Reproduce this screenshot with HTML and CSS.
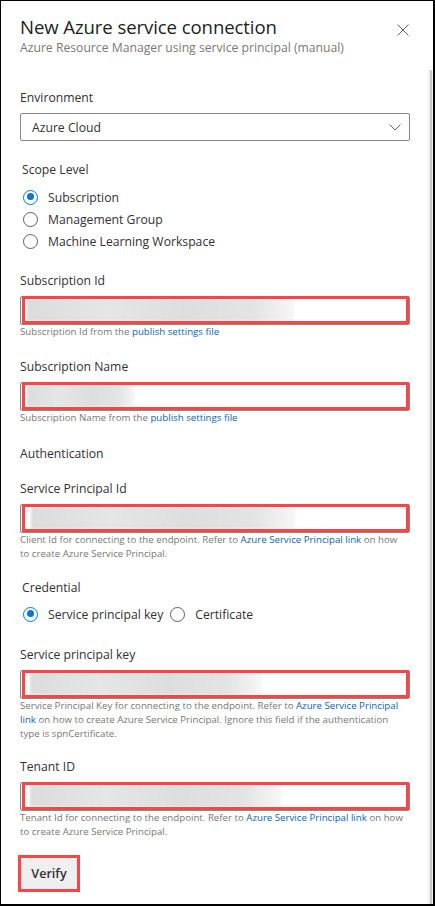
FILE: index.html
```html
<!DOCTYPE html>
<html>
<head>
<meta charset="utf-8">
<link rel="stylesheet" href="styles.css">
</head>
<body>
<div class="frame">
  <div class="scrollbar"><div class="thumb"></div></div>
  <div class="panel">
    <header class="head">
      <div class="titles">
        <h1 class="title">New Azure service connection</h1>
        <div class="subtitle">Azure Resource Manager using service principal (manual)</div>
      </div>
      <svg class="close" width="12" height="12" viewBox="0 0 12 12"><path d="M0.5 0.5 L11.5 11.5 M11.5 0.5 L0.5 11.5" stroke="#605e5c" stroke-width="1" fill="none"/></svg>
    </header>

    <section class="field env">
      <div class="label">Environment</div>
      <div class="select">
        <span>Azure Cloud</span>
        <svg class="chev" width="12" height="7" viewBox="0 0 12 7"><path d="M0.5 0.5 L6 6 L11.5 0.5" stroke="#605e5c" stroke-width="1" fill="none"/></svg>
      </div>
    </section>

    <section class="group scope">
      <div class="label indent">Scope Level</div>
      <div class="radios col">
        <div class="radio checked"><span class="dot"></span><span>Subscription</span></div>
        <div class="radio"><span class="dot"></span><span>Management Group</span></div>
        <div class="radio"><span class="dot"></span><span>Machine Learning Workspace</span></div>
      </div>
    </section>

    <section class="field first">
      <div class="label">Subscription Id</div>
      <div class="input"><div class="blur" style="left:6px;width:267px"></div><div class="mark"></div></div>
      <div class="help">Subscription Id from the <a>publish settings file</a></div>
    </section>

    <section class="field">
      <div class="label">Subscription Name</div>
      <div class="input"><div class="blur" style="left:6px;width:108px"></div><div class="mark"></div></div>
      <div class="help">Subscription Name from the <a>publish settings file</a></div>
    </section>

    <div class="label section">Authentication</div>

    <section class="field">
      <div class="label">Service Principal Id</div>
      <div class="input"><div class="blur" style="left:10px;width:264px"></div><div class="mark"></div></div>
      <div class="help">Client Id for connecting to the endpoint. Refer to <a>Azure Service Principal link</a> on how to create Azure Service Principal.</div>
    </section>

    <section class="group cred">
      <div class="label indent">Credential</div>
      <div class="radios row">
        <div class="radio checked"><span class="dot"></span><span>Service principal key</span></div>
        <div class="radio"><span class="dot"></span><span>Certificate</span></div>
      </div>
    </section>

    <section class="field">
      <div class="label">Service principal key</div>
      <div class="input"><div class="blur" style="left:9px;width:232px"></div><div class="mark"></div></div>
      <div class="help">Service Principal Key for connecting to the endpoint. Refer to <a>Azure Service Principal link</a> on how to create Azure Service Principal. Ignore this field if the authentication type is spnCertificate.</div>
    </section>

    <section class="field tenant">
      <div class="label">Tenant ID</div>
      <div class="input"><div class="blur" style="left:9px;width:252px"></div><div class="mark"></div></div>
      <div class="help">Tenant Id for connecting to the endpoint. Refer to <a>Azure Service Principal link</a> on how to create Azure Service Principal.</div>
    </section>

    <div class="actions">
      <button class="verify">Verify</button>
    </div>
  </div>
</div>
</body>
</html>
```
FILE: styles.css
```css
* { box-sizing: border-box; }
html, body { margin: 0; padding: 0; background: #fff; }
body {
  font-family: "Open Sans", "Noto Sans", sans-serif;
  color: #323130;
  width: 435px;
  height: 906px;
  overflow: hidden;
}
.frame {
  position: relative;
  width: 435px;
  height: 906px;
  border: 1px solid #000;
  border-right-width: 2px;
  border-bottom-width: 2px;
  background: #fff;
  overflow: hidden;
}
.scrollbar {
  position: absolute;
  right: 0;
  top: 69px;
  bottom: 0;
  width: 5px;
  background: #f0f0f0;
}
.thumb {
  position: absolute;
  right: 1px;
  top: 0;
  bottom: 0;
  width: 2px;
  background: #c8c8c8;
}
.panel {
  padding: 12px 23px 0 19px;
}
.head {
  display: flex;
  justify-content: space-between;
  align-items: flex-start;
}
.title {
  margin: 0;
  font-size: 18.6px;
  font-weight: 400;
  line-height: 27px;
  color: #201f1e;
  letter-spacing: -0.1px;
}
.subtitle {
  font-size: 12.2px;
  line-height: 16px;
  color: #7a7876;
}
.close {
  margin: 11px 1px 0 0;
}
.label {
  font-size: 12.2px;
  line-height: 18px;
  color: #323130;
}
.label.indent { padding-left: 2px; }
.field.env { margin-top: 33px; }
.env .label { margin-bottom: 7px; }
.select {
  height: 28px;
  border: 1px solid #8a8886;
  border-radius: 2px;
  display: flex;
  align-items: center;
  justify-content: space-between;
  padding: 0 8px 0 11px;
  font-size: 12.2px;
  color: #323130;
}
.chev { margin-top: 1px; }
.scope { margin-top: 20px; }
.radios { padding-left: 3px; margin-top: 7px; }
.radios.col { display: flex; flex-direction: column; }
.radios.row { display: flex; gap: 7px; margin-top: 6px; }
.radio {
  display: flex;
  align-items: center;
  height: 22px;
  font-size: 12.2px;
  color: #323130;
  gap: 10px;
}
.dot {
  width: 15px;
  height: 15px;
  border: 1px solid #605e5c;
  border-radius: 50%;
  background: #fff;
  position: relative;
  flex: none;
}
.radio.checked .dot {
  border: 1.5px solid #0078d4;
}
.radio.checked .dot::after {
  content: "";
  position: absolute;
  left: 2.5px;
  top: 2.5px;
  width: 7px;
  height: 7px;
  border-radius: 50%;
  background: #0078d4;
}
.field { margin-top: 19px; }
.field.first { margin-top: 20px; }
.field .label { margin-bottom: 6px; }
.input {
  position: relative;
  height: 29px;
  border: 1px solid #8a8886;
  border-radius: 2px;
}
.blur {
  position: absolute;
  top: 2px;
  bottom: 3px;
  background: linear-gradient(90deg, #dcdcdc 0%, #e6e6e6 30%, #dedede 60%, #e4e4e4 85%, #f7f7f7 100%);
  filter: blur(1px);
}
.mark {
  position: absolute;
  left: 1px;
  right: 0;
  top: -1px;
  bottom: 0;
  border: 3px solid #f94548;
}
.help {
  font-size: 9.7px;
  line-height: 14px;
  color: #797775;
  padding-right: 4px;
}
.help a { color: #0a64b4; }
.section { margin-top: 20px; }
.section + .field { margin-top: 17px; }
.cred { margin-top: 18px; }
.cred + .field { margin-top: 21px; }
.field.tenant { margin-top: 17px; }
.actions { margin-top: 16px; margin-left: -2px; }
.verify {
  font-family: inherit;
  font-size: 12.6px;
  font-weight: 600;
  color: #323130;
  background: #efefef;
  border: 3px solid #f94548;
  width: 62px;
  height: 37px;
  padding: 0;
  border-radius: 0;
}
```
